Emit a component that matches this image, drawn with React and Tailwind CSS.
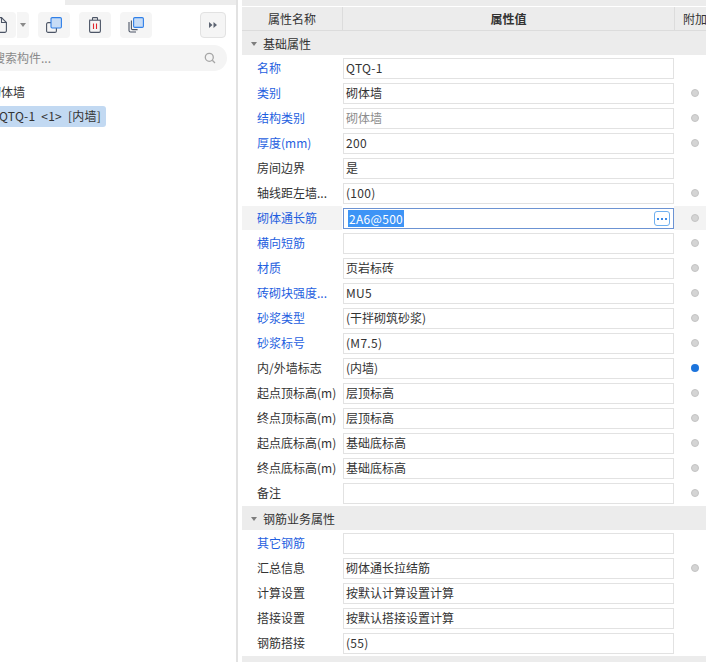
const FONT = "font-['Noto_Sans_CJK_SC','Noto_Sans',sans-serif]";

const group1 = [
  { l: '名称', v: 'QTQ-1', blue: true, dot: '', lat: true },
  { l: '类别', v: '砌体墙', blue: true, dot: 'g' },
  { l: '结构类别', v: '砌体墙', blue: true, dot: 'g', muted: true },
  { l: '厚度(mm)', v: '200', blue: true, dot: 'g', lat: true },
  { l: '房间边界', v: '是', dot: '' },
  { l: '轴线距左墙...', v: '(100)', dot: 'g', lat: true },
  { l: '砌体通长筋', v: '2A6@500', blue: true, dot: 'g', active: true, lat: true },
  { l: '横向短筋', v: '', blue: true, dot: 'g' },
  { l: '材质', v: '页岩标砖', blue: true, dot: 'g' },
  { l: '砖砌块强度...', v: 'MU5', blue: true, dot: 'g', lat: true },
  { l: '砂浆类型', v: '(干拌砌筑砂浆)', blue: true, dot: 'g' },
  { l: '砂浆标号', v: '(M7.5)', blue: true, dot: 'g', lat: true },
  { l: '内/外墙标志', v: '(内墙)', dot: 'b' },
  { l: '起点顶标高(m)', v: '层顶标高', dot: 'g' },
  { l: '终点顶标高(m)', v: '层顶标高', dot: 'g' },
  { l: '起点底标高(m)', v: '基础底标高', dot: 'g' },
  { l: '终点底标高(m)', v: '基础底标高', dot: 'g' },
  { l: '备注', v: '', dot: 'g' },
];
const group2 = [
  { l: '其它钢筋', v: '', blue: true, dot: '' },
  { l: '汇总信息', v: '砌体通长拉结筋', dot: 'g' },
  { l: '计算设置', v: '按默认计算设置计算', dot: '' },
  { l: '搭接设置', v: '按默认搭接设置计算', dot: '' },
  { l: '钢筋搭接', v: '(55)', dot: '', lat: true },
];

function Row({ r }) {
  return (
    <div className="flex h-[25px]">
      <div className={`w-[100px] mt-px pl-[15px] flex items-center text-xs whitespace-nowrap ${r.active ? 'bg-[#f3f3f3]' : ''} ${r.blue ? 'text-[#1f5fe0]' : 'text-[#333333]'}`}>
        {r.l}
      </div>
      {r.active ? (
        <div className="w-[331px] ml-px mt-[3px] h-[21px] border border-[#6c93d3] flex items-center pl-1 pr-[3px] justify-between text-xs">
          <span className="bg-[#3d94f6] text-white leading-[17px] px-px tracking-[0.3px]">{r.v}</span>
          <span className="w-4 h-[15px] rounded-[3px] border border-[#6fb0f0] flex items-center justify-center gap-[2px]">
            <i className="block w-[2px] h-[2px] bg-[#3d8be8]" />
            <i className="block w-[2px] h-[2px] bg-[#3d8be8]" />
            <i className="block w-[2px] h-[2px] bg-[#3d8be8]" />
          </span>
        </div>
      ) : (
        <div className={`w-[331px] ml-px mt-[3px] h-[21px] border border-[#e2e2e2] flex items-center px-[2px] pb-px text-xs ${r.lat ? 'tracking-[0.3px]' : ''} ${r.muted ? 'text-[#8c8c8c]' : 'text-[#333333]'}`}>
          {r.v}
        </div>
      )}
      <div className={`flex-1 mt-px flex items-center pl-[17px] ${r.active ? 'bg-[#f3f3f3]' : ''}`}>
        {r.dot === 'g' && <span className="w-2 h-2 rounded-full bg-[#d4d4d4] border border-[#c4c4c4]" />}
        {r.dot === 'b' && <span className="w-2 h-2 rounded-full bg-[#1c74dc]" />}
      </div>
    </div>
  );
}

function Section({ t }) {
  return (
    <div className="h-6 bg-[#ececec] flex items-center pl-[9px] pt-px text-xs text-[#333333]">
      <svg width="6" height="4" viewBox="0 0 6 4" className="mr-[6px]"><path d="M0 0h6L3 4z" fill="#7d7d7d" /></svg>
      {t}
    </div>
  );
}

function Btn({ children, className = 'w-8' }) {
  return <div className={`h-[26px] bg-[#f5f5f5] rounded-[4px] flex items-center justify-center ${className}`}>{children}</div>;
}

export default function App() {
  return (
    <div className={`${FONT} w-[706px] h-[662px] bg-white flex overflow-hidden`}>
      <div className="w-[236px] h-full shrink-0 overflow-hidden flex flex-col">
        <div className="h-[5px] ml-[65px] bg-[#ececec] shrink-0" />
        <div className="flex items-center mt-[7px] h-[26px] -ml-[16px]">
          <div className="h-[26px] w-[32px] bg-[#f5f5f5] rounded-[4px] flex items-center justify-center">
            <svg width="14" height="16" viewBox="0 0 14 16" fill="none" stroke="#4c5566" strokeWidth="1.1">
              <path d="M1 .6h7.5L13.4 5.5v8.3a1.6 1.6 0 0 1-1.6 1.6H2.6A1.6 1.6 0 0 1 1 13.8z" />
              <path d="M8.5 .6V5.5h4.9" />
            </svg>
          </div>
          <div className="h-[26px] w-[12px] ml-px bg-[#f5f5f5] rounded-r-[4px] flex items-center justify-center">
            <svg width="6" height="4" viewBox="0 0 6 4"><path d="M0 0h6L3 4z" fill="#8a8a8a" /></svg>
          </div>
          <Btn className="w-8 ml-[9px]">
            <svg width="16" height="16" viewBox="0 0 16 16" fill="none">
              <rect x="0.6" y="5.6" width="9.8" height="9.8" rx="1.5" stroke="#4c5566" strokeWidth="1.1" />
              <rect x="5" y="0.6" width="10.4" height="10.4" rx="1.2" fill="#c7dcf6" stroke="#2f7fe8" strokeWidth="1.1" />
            </svg>
          </Btn>
          <Btn className="w-8 ml-[9px]">
            <svg width="14" height="16" viewBox="0 0 14 16" fill="none">
              <path d="M1 3.2h12" stroke="#4c5566" strokeWidth="1.1" />
              <path d="M4.5 3V1.2a.6.6 0 0 1 .6-.6h3.8a.6.6 0 0 1 .6.6V3" stroke="#4c5566" strokeWidth="1.1" />
              <path d="M1.6 3.5v10.6a1.3 1.3 0 0 0 1.3 1.3h8.2a1.3 1.3 0 0 0 1.3-1.3V3.5" stroke="#4c5566" strokeWidth="1.1" />
              <path d="M5.5 6.5v5.5M8.5 6.5v5.5" stroke="#e0282e" strokeWidth="1.1" />
            </svg>
          </Btn>
          <Btn className="w-8 ml-[9px]">
            <svg width="16" height="16" viewBox="0 0 16 16" fill="none">
              <path d="M1 5v8.4A1.6 1.6 0 0 0 2.6 15H8" stroke="#4c5566" strokeWidth="1.1" />
              <path d="M3.4 3.4v8a1.2 1.2 0 0 0 1.2 1.2h5" stroke="#4c5566" strokeWidth="1.1" />
              <rect x="5.6" y="0.6" width="9.8" height="9.8" rx="1.2" fill="#c7dcf6" stroke="#2f7fe8" strokeWidth="1.1" />
            </svg>
          </Btn>
          <div className="w-[26px] h-[26px] ml-[48px] bg-[#f5f5f5] border border-[#e2e2e2] rounded-[4px] flex items-center justify-center">
            <svg width="8" height="6" viewBox="0 0 8 6" fill="#5d6472"><path d="M0 0l3.5 3L0 6zM4.5 0L8 3 4.5 6z" /></svg>
          </div>
        </div>
        <div className="mt-[7px] h-[26px] w-[243px] -ml-[16px] bg-[#f4f4f4] rounded-full flex items-center justify-between pl-[16px] pr-[11px] text-xs text-[#8a8a8a]">
          <span className="-ml-[7px]">搜索构件...</span>
          <svg width="12" height="12" viewBox="0 0 12 12" fill="none" stroke="#a6a6a6" strokeWidth="1.3">
            <circle cx="5.3" cy="5.3" r="4" />
            <path d="M8.3 8.3L11 11" />
          </svg>
        </div>
        <div className="mt-[13px] h-[16px] -ml-[11px] flex items-center text-xs text-[#333333]">砌体墙</div>
        <div className="mt-[6px] h-[21px] w-[117px] -ml-[11px] bg-[#c2d9f2] rounded-[3px] flex items-center pl-[10px] pb-px text-xs text-[#333333] whitespace-pre tracking-[0.25px]">
          {'QTQ-1  <1>  [内墙]'}
        </div>
      </div>
      <div className="w-[2px] h-full bg-[#e2e2e2] shrink-0" />
      <div className="w-[4px] shrink-0" />
      <div className="flex-1 h-full flex flex-col overflow-hidden">
        <div className="h-[6px] bg-[#ececec] shrink-0" />
        <div className="h-6 mt-px bg-[#ececec] border-b border-[#dcdcdc] flex text-xs text-[#333333] shrink-0">
          <div className="w-[101px] border-r border-[#dcdcdc] flex items-center justify-center">属性名称</div>
          <div className="w-[332px] border-r border-[#dcdcdc] flex items-center justify-center font-bold">属性值</div>
          <div className="flex-1 flex items-center pl-[8px] whitespace-nowrap overflow-hidden">附加</div>
        </div>
        <Section t="基础属性" />
        {group1.map((r) => <Row key={r.l} r={r} />)}
        <div className="h-px" />
        <Section t="钢筋业务属性" />
        {group2.map((r) => <Row key={r.l} r={r} />)}
        <div className="flex-1 mt-px bg-[#ececec]" />
      </div>
    </div>
  );
}
